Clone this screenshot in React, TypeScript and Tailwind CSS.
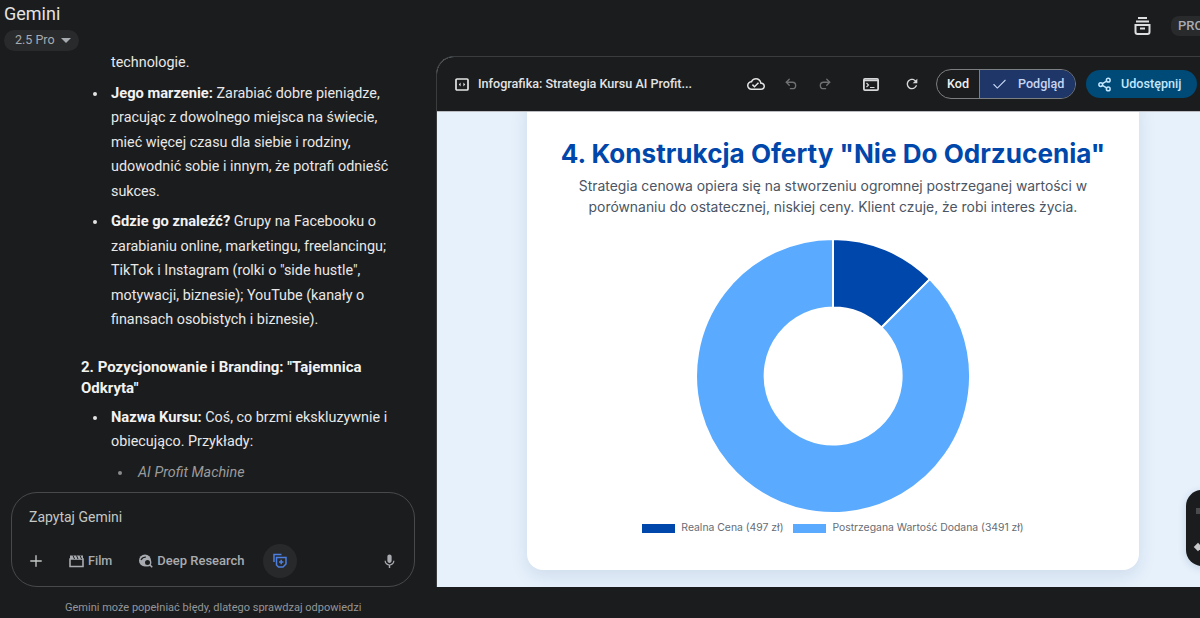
import { Undo2, Redo2, Check, Share2, Plus } from "lucide-react";

const Donut = () => (
  <svg width="276" height="276" viewBox="0 0 276 276" className="block">
    <path d="M138 1 A137 137 0 0 1 234.9 41.1 L186.5 89.5 A68.5 68.5 0 0 0 138 69.5 Z" fill="#0047AB" stroke="#fff" strokeWidth="2" />
    <path d="M234.9 41.1 A137 137 0 1 1 138 1 L138 69.5 A68.5 68.5 0 1 0 186.5 89.5 Z" fill="#5AABFF" stroke="#fff" strokeWidth="2" />
  </svg>
);

const bullet = "relative before:absolute before:left-[-18px] before:top-[10px] before:h-[4px] before:w-[4px] before:rounded-full before:bg-[#e3e3e3] before:content-['']";
const strong = "text-[14.7px] leading-none text-[#f2f2f2]";

const App = () => {
  return (
    <div className="flex h-[618px] w-[1200px] overflow-hidden bg-[#1b1c1d] font-['Roboto',sans-serif] text-[#e3e3e3]">
      {/* czat */}
      <aside className="relative flex w-[436px] shrink-0 flex-col">
        <div className="h-[50px] shrink-0 pl-[4px] pt-[2px]">
          <div className="text-[18px] leading-[24px] text-[#e3e3e3]">Gemini</div>
          <div className="mt-[4px] flex h-[21px] w-[75px] items-center gap-[6px] rounded-full bg-[#282a2c] pl-[11px] text-[12.5px] text-[#a8abb0]">
            2.5 Pro
            <span className="h-0 w-0 border-x-[5px] border-t-[5px] border-x-transparent border-t-[#a8abb0]" />
          </div>
        </div>
        <div className="min-h-0 flex-1 overflow-hidden pl-[111px] pr-[40px] pt-[1px] text-[14.35px] leading-[24.5px] text-[#e8e8e8]">
          <p>technologie.</p>
          <ul className="mt-[6px]">
            <li className={`${bullet} mb-[6px]`}><b className={strong}>Jego marzenie:</b> Zarabiać dobre pieniądze, pracując z dowolnego miejsca na świecie, mieć więcej czasu dla siebie i rodziny, udowodnić sobie i innym, że potrafi odnieść sukces.</li>
            <li className={bullet}><b className={strong}>Gdzie go znaleźć?</b> Grupy na Facebooku o zarabianiu online, marketingu, freelancingu; TikTok i Instagram (rolki o "side hustle", motywacji, biznesie); YouTube (kanały o finansach osobistych i biznesie).</li>
          </ul>
          <p className="-ml-[30px] mt-[24px] text-[15px] font-bold leading-[21px] text-[#f2f2f2]">2. Pozycjonowanie i Branding: "Tajemnica Odkryta"</p>
          <ul className="mt-[7px]">
            <li className={bullet}><b className={strong}>Nazwa Kursu:</b> Coś, co brzmi ekskluzywnie i obiecująco. Przykłady:
              <ul className="ml-[27px] mt-[6px] italic text-[#9a9b9c]"><li className="relative before:absolute before:left-[-20px] before:top-[10px] before:h-[4px] before:w-[4px] before:rounded-full before:bg-[#8a8b8c] before:content-['']">AI Profit Machine</li></ul>
            </li>
          </ul>
        </div>
        <div className="mx-[11px] mb-[31px] h-[95px] w-[404px] shrink-0 rounded-[26px] border border-[#47494b] px-[17px] pt-[14px]">
          <div className="text-[14px] leading-[20px] text-[#c4c7c5]">Zapytaj Gemini</div>
          <div className="mt-[17px] flex h-[34px] items-center text-[13px] font-medium text-[#a8abb0]">
            <Plus size={18} strokeWidth={1.8} className="-ml-[2px] text-[#c4c7c5]" />
            <svg width="15" height="14" viewBox="0 0 15 14" fill="none" className="ml-[24px]"><path d="M1 5h13v7.5H1z" stroke="#a8abb0" strokeWidth="1.6" /><path d="M1 1.5h13v3.5H1z" fill="#a8abb0" /><path d="M4 1.5l1.5 3.5M7.5 1.5l1.5 3.5M11 1.5l1.5 3.5" stroke="#1b1c1d" strokeWidth="1" /></svg>
            <span className="ml-[4px] text-[12.6px]">Film</span>
            <svg width="16" height="16" viewBox="0 0 16 16" fill="none" className="ml-[26px]"><circle cx="7" cy="7.5" r="6" fill="#a8abb0" /><path d="M3 7c1-2 3-3 5-3" stroke="#1b1c1d" strokeWidth="1.2" /><circle cx="9.5" cy="9.5" r="3.2" fill="#1b1c1d" stroke="#a8abb0" strokeWidth="1.4" /><path d="M11.8 11.8l2.4 2.4" stroke="#a8abb0" strokeWidth="1.6" /></svg>
            <span className="ml-[3px]">Deep Research</span>
            <span className="ml-[18px] flex h-[34px] w-[34px] items-center justify-center rounded-full bg-[#28292b]">
              <svg width="16" height="16" viewBox="0 0 16 16" fill="none" stroke="#4c7fe0" strokeWidth="1.5"><path d="M9.5 1.5H2v7.5" /><path d="M4.5 4.5h9.5v6.5l-3 3H6.5l-2-2z" /><path d="M9.2 6.8v4.4M7 9h4.4" /></svg>
            </span>
            <svg width="17" height="17" viewBox="0 0 24 24" fill="#a8abb0" className="ml-auto mr-[-1px]"><path d="M12 14c1.66 0 3-1.34 3-3V5c0-1.66-1.34-3-3-3S9 3.34 9 5v6c0 1.66 1.34 3 3 3zm5.3-3c0 3-2.54 5.1-5.3 5.1S6.7 14 6.7 11H5c0 3.41 2.72 6.23 6 6.72V21h2v-3.28c3.28-.48 6-3.3 6-6.72h-1.7z" /></svg>
          </div>
        </div>
        <div className="absolute bottom-[3px] left-[65px] text-[11px] leading-[14px] text-[#94979a]">Gemini może popełniać błędy, dlatego sprawdzaj odpowiedzi</div>
      </aside>

      {/* prawa strona */}
      <main className="flex min-w-0 flex-1 flex-col">
        <div className="relative h-[56px] shrink-0">
          <svg width="17" height="18" viewBox="0 0 17 18" fill="none" stroke="#dcdedf" strokeWidth="2" className="absolute left-[698px] top-[17px]"><path d="M4 1h9M2 4.5h13" /><path d="M1.5 8h14v7a2 2 0 0 1-2 2h-10a2 2 0 0 1-2-2z" /><path d="M6 11.5h5" /></svg>
          <div className="absolute left-[735px] top-[16px] flex h-[20px] w-[60px] items-center rounded-l-[8px] bg-[#282a2c] pl-[7px] text-[13px] font-medium text-[#a8abb0]">PRO</div>
        </div>
        <section className="relative flex h-[531px] shrink-0 flex-col overflow-hidden rounded-tl-[18px] border-l border-t border-[#3a3c3e] bg-[#e6f1fc]">
          <div className="flex h-[54px] shrink-0 items-center bg-[#1b1c1d] pl-[18px] text-[#e3e3e3]">
            <svg width="14" height="13" viewBox="0 0 14 13" fill="none" className="shrink-0"><rect x="1" y="1" width="12" height="11" rx="1" stroke="#e3e3e3" strokeWidth="1.7" /><path d="M5.6 4.5L3.8 6.5l1.8 2zM8.4 4.5l1.8 2-1.8 2z" fill="#e3e3e3" /></svg>
            <span className="ml-[9px] w-[230px] shrink-0 text-[12.6px] font-medium">Infografika: Strategia Kursu AI Profit...</span>
            <svg width="18" height="18" viewBox="0 0 24 24" fill="#e3e3e3" className="ml-[39px] shrink-0"><path d="M19.35 10.04C18.67 6.59 15.64 4 12 4 9.11 4 6.6 5.64 5.35 8.04 2.34 8.36 0 10.91 0 14c0 3.31 2.69 6 6 6h13c2.76 0 5-2.24 5-5 0-2.64-2.05-4.78-4.65-4.96zM19 18H6c-2.21 0-4-1.79-4-4 0-2.05 1.53-3.76 3.56-3.97l1.07-.11.5-.95C8.08 7.14 9.94 6 12 6c2.62 0 4.88 1.86 5.39 4.43l.3 1.5 1.53.11c1.56.1 2.78 1.41 2.78 2.96 0 1.65-1.35 3-3 3zm-9-3.82l-2.09-2.09L6.5 13.5 10 17l6.01-6.01-1.41-1.41z" /></svg>
            <Undo2 size={14} strokeWidth={2.3} className="ml-[19px] shrink-0 text-[#6f7173]" />
            <Redo2 size={14} strokeWidth={2.3} className="ml-[20px] shrink-0 text-[#6f7173]" />
            <svg width="16" height="13" viewBox="0 0 16 13" fill="none" className="ml-[31px] shrink-0"><rect x="0.9" y="0.9" width="14.2" height="11.2" rx="1" stroke="#d5d7d8" strokeWidth="1.8" /><path d="M0.9 2.5h14.2" stroke="#d5d7d8" strokeWidth="1.5" /><path d="M3.5 5l2 2-2 2M7 9.5h4.5" stroke="#d5d7d8" strokeWidth="1.2" /></svg>
            <svg width="16" height="16" viewBox="0 0 24 24" fill="#d5d7d8" className="ml-[25px] shrink-0"><path d="M17.65 6.35C16.2 4.9 14.21 4 12 4c-4.42 0-7.99 3.58-7.99 8s3.57 8 7.99 8c3.73 0 6.84-2.55 7.73-6h-2.08c-.82 2.33-3.04 4-5.65 4-3.31 0-6-2.69-6-6s2.69-6 6-6c1.66 0 3.14.69 4.22 1.78L13 11h7V4l-2.35 2.35z" /></svg>
            <div className="ml-[16px] flex h-[30px] w-[140px] shrink-0 overflow-hidden rounded-full border border-[#7c7f82] text-[12.6px] font-medium">
              <span className="flex w-[43px] items-center justify-center border-r border-[#7c7f82] text-[#f0f0f0]">Kod</span>
              <span className="flex flex-1 items-center gap-[10px] bg-[#1e3768] pl-[11px] text-[#c5d5f5]"><Check size={17} strokeWidth={1.5} />Podgląd</span>
            </div>
            <div className="ml-[10px] flex h-[28px] w-[111px] shrink-0 items-center gap-[9px] rounded-full bg-[#004a77] pl-[11px] text-[12.6px] font-medium text-[#c2e7ff]"><Share2 size={15} strokeWidth={2.4} />Udostępnij</div>
          </div>
          <div className="h-[1px] shrink-0 bg-[#b9bcc0]" />
          <div className="min-h-0 flex-1 overflow-hidden">
            <div className="-mt-[20px] ml-[90px] flex h-[478px] w-[612px] flex-col items-center rounded-[16px] bg-white pt-[44px] font-['Inter',sans-serif] shadow-[0_6px_18px_rgba(0,40,90,0.1)]">
              <h1 className="text-[26.1px] font-bold leading-[36px] text-[#0047AB]">4. Konstrukcja Oferty "Nie Do Odrzucenia"</h1>
              <p className="mt-[4px] w-[560px] text-center text-[13.9px] leading-[21px] text-[#4b5563]">Strategia cenowa opiera się na stworzeniu ogromnej postrzeganej wartości w porównaniu do ostatecznej, niskiej ceny. Klient czuje, że robi interes życia.</p>
              <div className="mt-[20px]"><Donut /></div>
              <div className="mt-[7px] flex items-center text-[10.4px] leading-[14px] text-[#666c75]">
                <span className="h-[9px] w-[33px] bg-[#0047AB]" />
                <span className="ml-[6px]">Realna Cena (497 zł)</span>
                <span className="ml-[10px] h-[9px] w-[33px] bg-[#5AABFF]" />
                <span className="ml-[6px]">Postrzegana Wartość Dodana (3491 zł)</span>
              </div>
            </div>
          </div>
          <div className="absolute left-[749px] top-[433px] h-[76px] w-[30px] rounded-l-[16px] bg-[#1b1c1d] shadow-[0_2px_8px_rgba(0,40,90,0.15)]">
            <span className="absolute left-[10px] top-[18px] h-[6px] w-[4px] bg-[#4a4b4d]" />
            <span className="absolute left-[9px] top-[54px] h-[6px] w-[6px] rotate-45 bg-[#c8c9ca]" />
          </div>
        </section>
        <div className="flex-1" />
      </main>
    </div>
  );
};

export default App;
